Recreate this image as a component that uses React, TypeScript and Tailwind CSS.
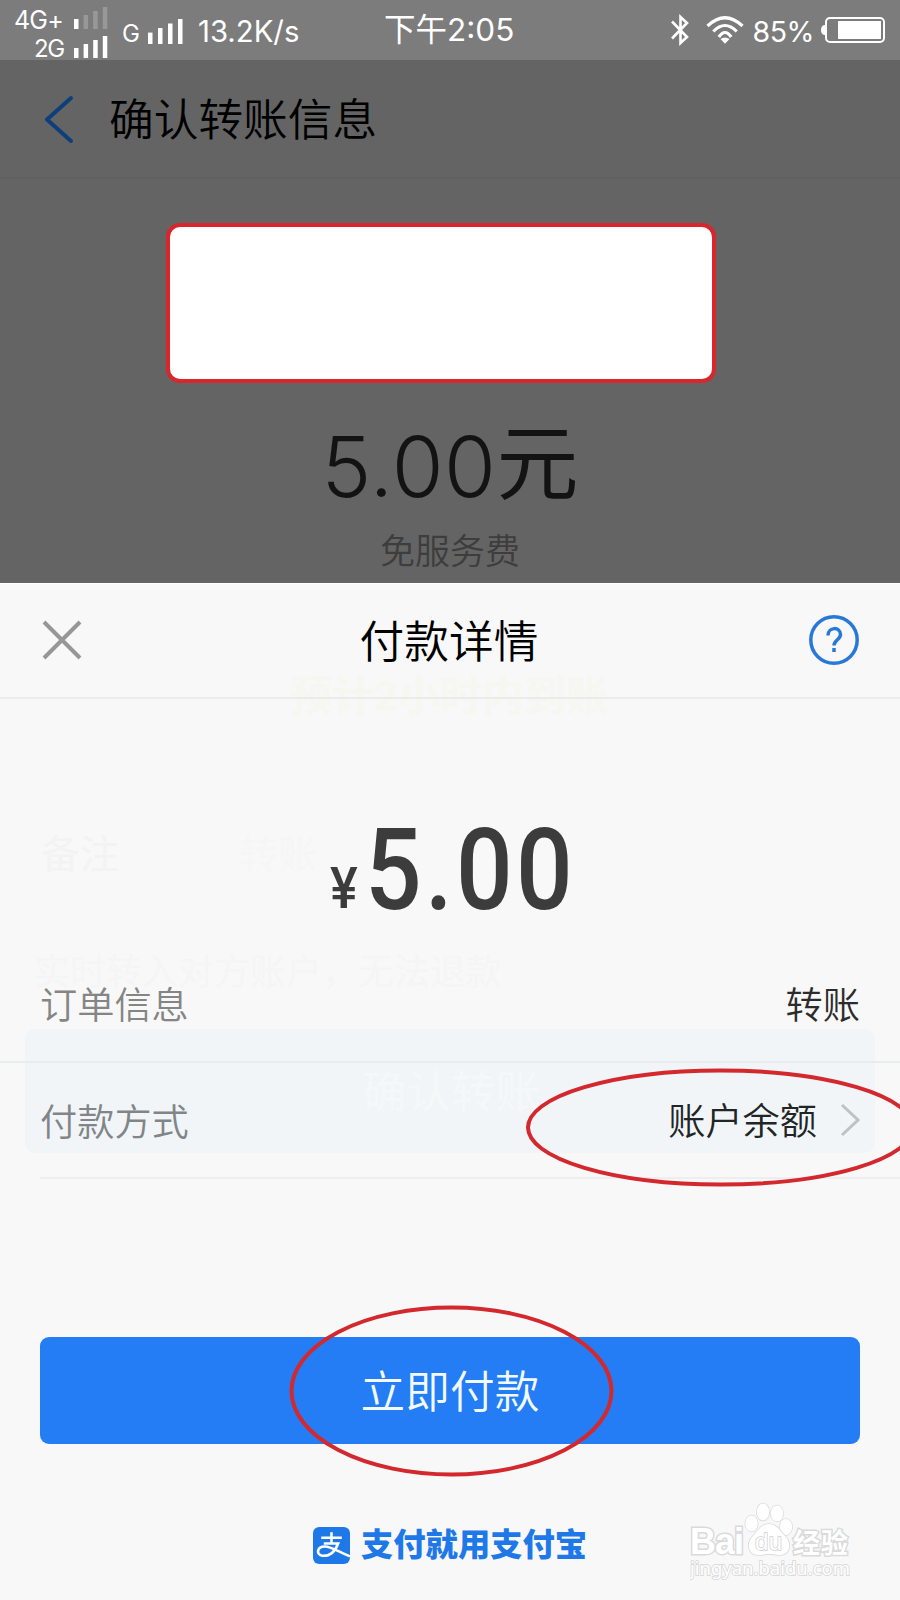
const bars = [10, 14, 18, 22];

function Signal({ size, dimFrom = 4 }: { size: 'sm' | 'lg'; dimFrom?: number }) {
  const k = size === 'lg' ? 1.14 : 1;
  const step = size === 'lg' ? 10 : 9.6;
  return (
    <svg width={size === 'lg' ? 36 : 34} height={25} fill="#fff">
      {bars.map((h, i) => (
        <rect
          key={h}
          x={i * step}
          y={25 - h * k}
          width={4.5}
          height={h * k}
          opacity={i >= dimFrom ? 0.22 : 1}
        />
      ))}
    </svg>
  );
}

function BluetoothIcon() {
  return (
    <svg width="20" height="34" viewBox="0 0 20 34" fill="none" stroke="#fff" strokeWidth="2.6">
      <path d="M2 8.500 17 24 10.500 30V4l6.500 6L2 25.500" />
    </svg>
  );
}

function WifiIcon() {
  return (
    <svg width="38" height="28" viewBox="0 0 38 28" fill="none" stroke="#fff" strokeWidth="3.200">
      <path d="M1.500 10Q19-6.500 36.500 10M7.300 15.500Q19 3.500 30.700 15.500M12.800 21Q19 12 25.200 21" />
      <path d="M14.500 23q4.500-3 9 0L19 27.800Z" fill="#fff" stroke="none" />
    </svg>
  );
}

function StatusBar() {
  return (
    <div className="relative flex h-[60px] shrink-0 items-center justify-between bg-[#7c7c7c] font-[Inter,'Noto_Sans_CJK_SC',sans-serif] text-white">
      <div className="flex items-center">
        <div className="w-[108px] self-start pl-[14px]">
          <div className="flex h-[27px] items-end justify-between">
            <span className="text-[25px] leading-[17px] tracking-[-0.8px]">4G+</span>
            <Signal size="sm" dimFrom={1} />
          </div>
          <div className="flex h-[29px] items-end justify-between">
            <span className="pl-[20px] text-[24px] leading-[19px] tracking-[-1.500px]">2G</span>
            <Signal size="sm" />
          </div>
        </div>
        <span className="ml-[14px] mt-2 w-[26px] text-[24px] leading-[30px]">G</span>
        <div className="mt-0.5">
          <Signal size="lg" />
        </div>
        <span className="ml-[14px] mt-[4px] text-[29.300px]">13.2K/s</span>
      </div>
      <span className="absolute left-[384px] top-[8px] text-[31.500px] leading-[44px]">下午2:05</span>
      <div className="flex items-center pr-[15px]">
        <BluetoothIcon />
        <span className="ml-[16px] mr-[9px]">
          <WifiIcon />
        </span>
        <span className="mt-[4px] text-[28.500px] tracking-[-0.5px]">85%</span>
        <svg className="ml-[7px]" width="64" height="28" viewBox="0 0 64 28">
          <path d="M4 9v10H3q-3-1-3-5t3-5Z" fill="#fff" />
          <rect x="5" y="2" width="58" height="24" rx="4" fill="none" stroke="#fff" strokeWidth="2" />
          <rect x="17" y="5" width="43" height="18" fill="#fff" />
        </svg>
      </div>
    </div>
  );
}

function TransferPage() {
  return (
    <div className="flex h-[523px] shrink-0 flex-col items-center bg-[#646464]">
      <div className="flex h-[119px] w-full items-center border-b-2 border-[#606060] pl-[44px]">
        <svg width="30" height="50" viewBox="0 0 30 50" fill="none" stroke="#0e3f7b" strokeWidth="4">
          <path d="M27 4 3 25.500 27 47" strokeLinecap="round" strokeLinejoin="round" />
        </svg>
        <h1 className="ml-[35px] pt-[7px] text-[44.700px] font-[350] text-black">确认转账信息</h1>
      </div>
      <div className="mt-[44px] mr-[19px] h-[160px] w-[550px] shrink-0 rounded-[14px] border-4 border-[#d9252c] bg-white" />
      <div className="mt-[29px] flex h-[110px] shrink-0 items-center text-[#131313]">
        <span className="font-[Inter,sans-serif] text-[84px] font-[350] tracking-[0.5px]">5.00</span>
        <span className="pb-[20px] font-['Noto_Sans_CJK_SC',sans-serif] text-[82px] font-normal">元</span>
      </div>
      <p className="mt-[4px] text-[35px] leading-[54px] font-[350] text-[#3d3d3d]">免服务费</p>
    </div>
  );
}

function GhostLayer() {
  return (
    <div className="pointer-events-none absolute inset-0">
      <div className="absolute left-[25px] top-[446px] h-[124px] w-[850px] rounded-[10px] bg-[#f1f5f8]" />
      <span className="absolute left-[290px] top-[86px] text-[42px] leading-[56px] font-bold text-[#f6f7f1]">预计2小时内到账</span>
      <span className="absolute left-[41px] top-[244px] text-[39px] leading-[56px] text-[#f3f3f3]">备注</span>
      <span className="absolute left-[239px] top-[244px] text-[39px] leading-[56px] text-[#f6f6f6]">转账</span>
      <span className="absolute left-[34px] top-[362px] text-[36px] leading-[56px] text-[#f5f5f5]">实时转入对方账户，无法退款</span>
      <span className="absolute left-[362px] top-[482px] text-[44.500px] leading-[56px] text-[#f5f8f8]">确认转账</span>
    </div>
  );
}

function PaymentSheet() {
  return (
    <div className="relative flex grow flex-col bg-[#f8f8f8]">
      <GhostLayer />
      <div className="relative flex h-[116px] shrink-0 items-center justify-between border-t border-b-2 border-t-white border-b-[#ebebeb] px-[42px] pb-[2px]">
        <svg width="40" height="40" viewBox="0 0 40 40" stroke="#979797" strokeWidth="4">
          <path d="M2 2 38 38M38 2 2 38" />
        </svg>
        <h2 className="pt-[8px] pl-[7px] text-[44.700px] font-[350] text-black">付款详情</h2>
        <svg className="-mr-px" width="50" height="50" viewBox="0 0 50 50" fill="none" stroke="#2878d8" strokeWidth="3.500">
          <circle cx="25" cy="25" r="23.200" />
          <path d="M19 20.500c0-9 12.500-9 12.500-1 0 5-6.500 5.500-6.500 11" />
          <path d="M25 33v4" />
        </svg>
      </div>

      <div className="relative mt-[106px] flex h-[112px] items-end pl-[330px] font-[Roboto,sans-serif] font-medium text-[#3c3c3c]">
        <span className="w-[35px] origin-left scale-x-[0.9] text-[58px] leading-[58px]">¥</span>
        <span className="origin-left scale-x-[0.875] text-[114px] leading-[93px] tracking-[3.800px]">5.00</span>
      </div>

      <div className="relative mt-[30px] flex h-[116px] shrink-0 items-center justify-between border-b-2 border-[#e9ecec] px-[40px] pt-[6px] text-[37.200px] font-[350]">
        <span className="text-[#858585]">订单信息</span>
        <span className="text-[#2c2c2c]">转账</span>
      </div>
      <div className="relative ml-[40px] flex h-[116px] shrink-0 items-center justify-between border-b-2 border-[#eeeeee] pr-[40px] text-[37.200px] font-[350]">
        <span className="pt-[8px] text-[#828588]">付款方式</span>
        <div className="flex items-center text-[#222526]">
          <span className="pt-[6px]">账户余额</span>
          <svg className="ml-[23px]" width="20" height="34" viewBox="0 0 20 34" fill="none" stroke="#bfc2c4" strokeWidth="3">
            <path d="M2 2 18 17 2 32" />
          </svg>
        </div>
      </div>

      <button className="relative mx-[40px] mt-[158px] h-[107px] shrink-0 rounded-[9px] bg-[#247df5] pt-[6px] text-[44.700px] font-[350] text-[#f2faff]">
        立即付款
      </button>

      <div className="mt-[81px] flex items-center pl-[313px]">
        <svg width="37" height="37" viewBox="0 0 36 36" fill="none" stroke="#fff">
          <rect width="36" height="36" rx="6" fill="#1f78e8" stroke="none" />
          <path d="M8 10.500h20M18 5v11M10.500 16h14C21 25 15 28.500 9 28c-6.500-1.500-5-9 2.500-9C18 19 24 24 36 28.500" strokeWidth="2.500" />
        </svg>
        <span className="ml-[11px] text-[32.300px] leading-[40px] font-black text-[#1f78e8]">支付就用支付宝</span>
      </div>

      {/* marks round the payment method and the pay button */}
      <svg className="pointer-events-none absolute left-0 top-[477px]" width="900" height="430" fill="none" stroke="#d2282e" strokeWidth="4">
        <ellipse cx="720.500" cy="67.500" rx="192.500" ry="57" />
        <ellipse cx="451.500" cy="331" rx="160" ry="83.500" />
      </svg>
      <Watermark />
    </div>
  );
}

function Watermark() {
  return (
    <svg
      className="absolute right-[42px] bottom-[10px]"
      width="168"
      height="90"
      viewBox="0 0 168 90"
      fill="#fff"
      stroke="#dadada"
      strokeWidth="1.500"
    >
      <g fontFamily="Liberation Sans, sans-serif" fontWeight="bold" paintOrder="stroke">
        <text x="0" y="54" fontSize="36" textLength="54" strokeWidth="3">Bai</text>
        <ellipse cx="61.500" cy="23.500" rx="6.200" ry="8" />
        <ellipse cx="73" cy="12" rx="6.200" ry="8.500" />
        <ellipse cx="87" cy="13.500" rx="6.200" ry="8" />
        <ellipse cx="96" cy="27" rx="6.200" ry="8" />
        <path d="M79 24c-8 0-11 7-16 12-8 8-4 19 5 19 5 0 7-1 11-1s6 1 11 1c9 0 13-11 5-19-5-5-8-12-16-12Z" />
        <text x="65" y="50" fontSize="24" textLength="27" fontWeight="normal" stroke="#cfcfcf">du</text>
        <text x="103" y="53" fontSize="27" textLength="55" strokeWidth="3" fontFamily="Noto Sans CJK SC, sans-serif">经验</text>
      </g>
      <text x="0" y="75" fontSize="18.500" textLength="160" strokeWidth="1.800" paintOrder="stroke" fontFamily="Noto Sans, sans-serif">
        jingyan.baidu.com
      </text>
    </svg>
  );
}

export default function App() {
  return (
    <div className="flex h-[1600px] w-[900px] flex-col overflow-hidden font-[Roboto,'Noto_Sans_CJK_SC',sans-serif] whitespace-nowrap">
      <StatusBar />
      <TransferPage />
      <PaymentSheet />
    </div>
  );
}
